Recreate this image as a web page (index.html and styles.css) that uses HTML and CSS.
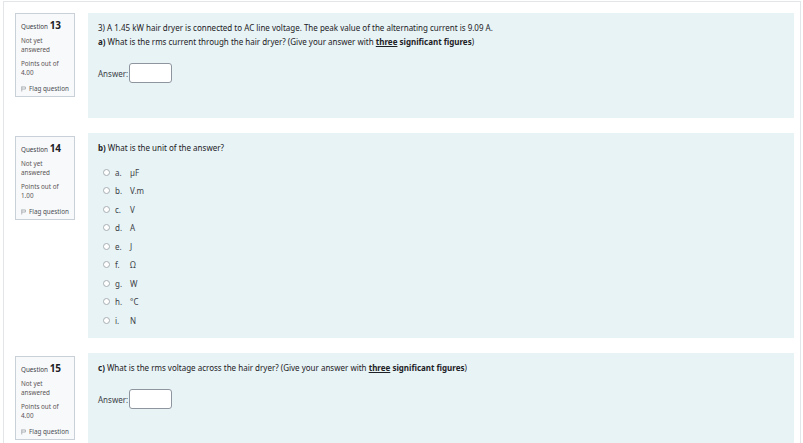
FILE: index.html
```html
<!DOCTYPE html>
<html>
<head>
<meta charset="utf-8">
<link rel="stylesheet" href="styles.css">
</head>
<body>
<div class="page">
  <div class="que">
    <div class="info">
      <div class="no">Question <span class="qno">13</span></div>
      <div class="state">Not yet<br>answered</div>
      <div class="grade">Points out of<br>4.00</div>
      <div class="flag"><svg class="flag-icon" viewBox="0 0 8 9" width="5" height="6"><path d="M1.2 0.5 V8.5 M1.2 1.2 H7 V4.6 H1.2" fill="none" stroke="#7b838a" stroke-width="0.9"/></svg>Flag question</div>
    </div>
    <div class="content">
      <div class="formulation q13">
        <p class="qtext">3) A 1.45 kW hair dryer is connected to AC line voltage. The peak value of the alternating current is 9.09 A.</p>
        <p class="qtext"><b>a)</b> What is the rms current through the hair dryer? (Give your answer with <b><u>three</u> significant figures</b>)</p>
        <div class="ablock"><span class="alabel">Answer:</span><span class="input"></span></div>
      </div>
    </div>
  </div>

  <div class="que">
    <div class="info">
      <div class="no">Question <span class="qno">14</span></div>
      <div class="state">Not yet<br>answered</div>
      <div class="grade">Points out of<br>1.00</div>
      <div class="flag"><svg class="flag-icon" viewBox="0 0 8 9" width="5" height="6"><path d="M1.2 0.5 V8.5 M1.2 1.2 H7 V4.6 H1.2" fill="none" stroke="#7b838a" stroke-width="0.9"/></svg>Flag question</div>
    </div>
    <div class="content">
      <div class="formulation q14">
        <p class="qtext"><b>b)</b> What is the unit of the answer?</p>
        <div class="options">
          <div class="opt"><span class="radio"></span><span class="letter">a.</span><span class="ans">µF</span></div>
          <div class="opt"><span class="radio"></span><span class="letter">b.</span><span class="ans">V.m</span></div>
          <div class="opt"><span class="radio"></span><span class="letter">c.</span><span class="ans">V</span></div>
          <div class="opt"><span class="radio"></span><span class="letter">d.</span><span class="ans">A</span></div>
          <div class="opt"><span class="radio"></span><span class="letter">e.</span><span class="ans">J</span></div>
          <div class="opt"><span class="radio"></span><span class="letter">f.</span><span class="ans">Ω</span></div>
          <div class="opt"><span class="radio"></span><span class="letter">g.</span><span class="ans">W</span></div>
          <div class="opt"><span class="radio"></span><span class="letter">h.</span><span class="ans">°C</span></div>
          <div class="opt"><span class="radio"></span><span class="letter">i.</span><span class="ans">N</span></div>
        </div>
      </div>
    </div>
  </div>

  <div class="que">
    <div class="info">
      <div class="no">Question <span class="qno">15</span></div>
      <div class="state">Not yet<br>answered</div>
      <div class="grade">Points out of<br>4.00</div>
      <div class="flag"><svg class="flag-icon" viewBox="0 0 8 9" width="5" height="6"><path d="M1.2 0.5 V8.5 M1.2 1.2 H7 V4.6 H1.2" fill="none" stroke="#7b838a" stroke-width="0.9"/></svg>Flag question</div>
    </div>
    <div class="content">
      <div class="formulation q15">
        <p class="qtext"><b>c)</b> What is the rms voltage across the hair dryer? (Give your answer with <b><u>three</u> significant figures</b>)</p>
        <div class="ablock"><span class="alabel">Answer:</span><span class="input"></span></div>
      </div>
    </div>
  </div>
</div>
</body>
</html>
```

FILE: styles.css
```css
html, body {
  margin: 0;
  padding: 0;
  background: #ffffff;
}
body {
  font-family: "Noto Sans", "Open Sans", sans-serif;
  color: #1d2125;
  font-size: 8px;
}
.page {
  margin: 1px 2px 0 3px;
  border-top: 1px solid #e3e6e9;
  border-left: 1px solid #e3e6e9;
  border-right: 1px solid #e3e6e9;
  padding: 11px 6px 0 11px;
}
.que {
  display: flex;
  gap: 13px;
  margin-bottom: 15px;
}
.info {
  flex: 0 0 60px;
  box-sizing: border-box;
  align-self: flex-start;
  background: #f8f9fa;
  border: 1px solid #cad0d7;
  padding: 5px 2px 3px 5px;
  font-size: 6.3px;
  line-height: 9px;
  color: #1d2125;
}
.que + .que .info {
  margin-top: 3px;
}
.no {
  line-height: 12px;
  color: #3b4046;
}
.qno {
  font-size: 10px;
  font-weight: 700;
  color: #1d2125;
}
.state {
  margin-top: 3px;
  color: #5a5456;
}
.grade {
  margin-top: 5px;
  color: #5a5456;
}
.flag {
  margin-top: 7px;
  display: flex;
  align-items: center;
  gap: 3px;
  color: #4a4f55;
  white-space: nowrap;
}
.flag-icon {
  display: block;
  flex: none;
}
.content {
  flex: 1;
}
.formulation {
  background: #e7f3f5;
  padding: 10px 10px;
  box-sizing: border-box;
}
.q13 { height: 105px; }
.q14 { height: 205px; }
.q15 { height: 95px; }
.qtext {
  margin: 0 0 4px 0;
  line-height: 10px;
}
.ablock {
  display: flex;
  align-items: center;
  margin-top: 16px;
}
.alabel {
  margin-right: 1px;
  color: #3b4046;
}
.input {
  display: block;
  width: 43px;
  height: 20px;
  box-sizing: border-box;
  background: #fff;
  border: 1px solid #8f959e;
  border-radius: 3px;
}
.options {
  margin-top: 14px;
  display: flex;
  flex-direction: column;
  gap: 8.5px;
}
.opt {
  display: flex;
  align-items: center;
  height: 10px;
  padding-left: 5px;
  color: #3b4046;
}
.radio {
  width: 7px;
  height: 7px;
  box-sizing: border-box;
  border: 1px solid #a8aeb4;
  border-radius: 50%;
  background: #fff;
  margin-right: 5px;
}
.letter {
  width: 15px;
}
.ans {
  color: #3b4046;
}
```
